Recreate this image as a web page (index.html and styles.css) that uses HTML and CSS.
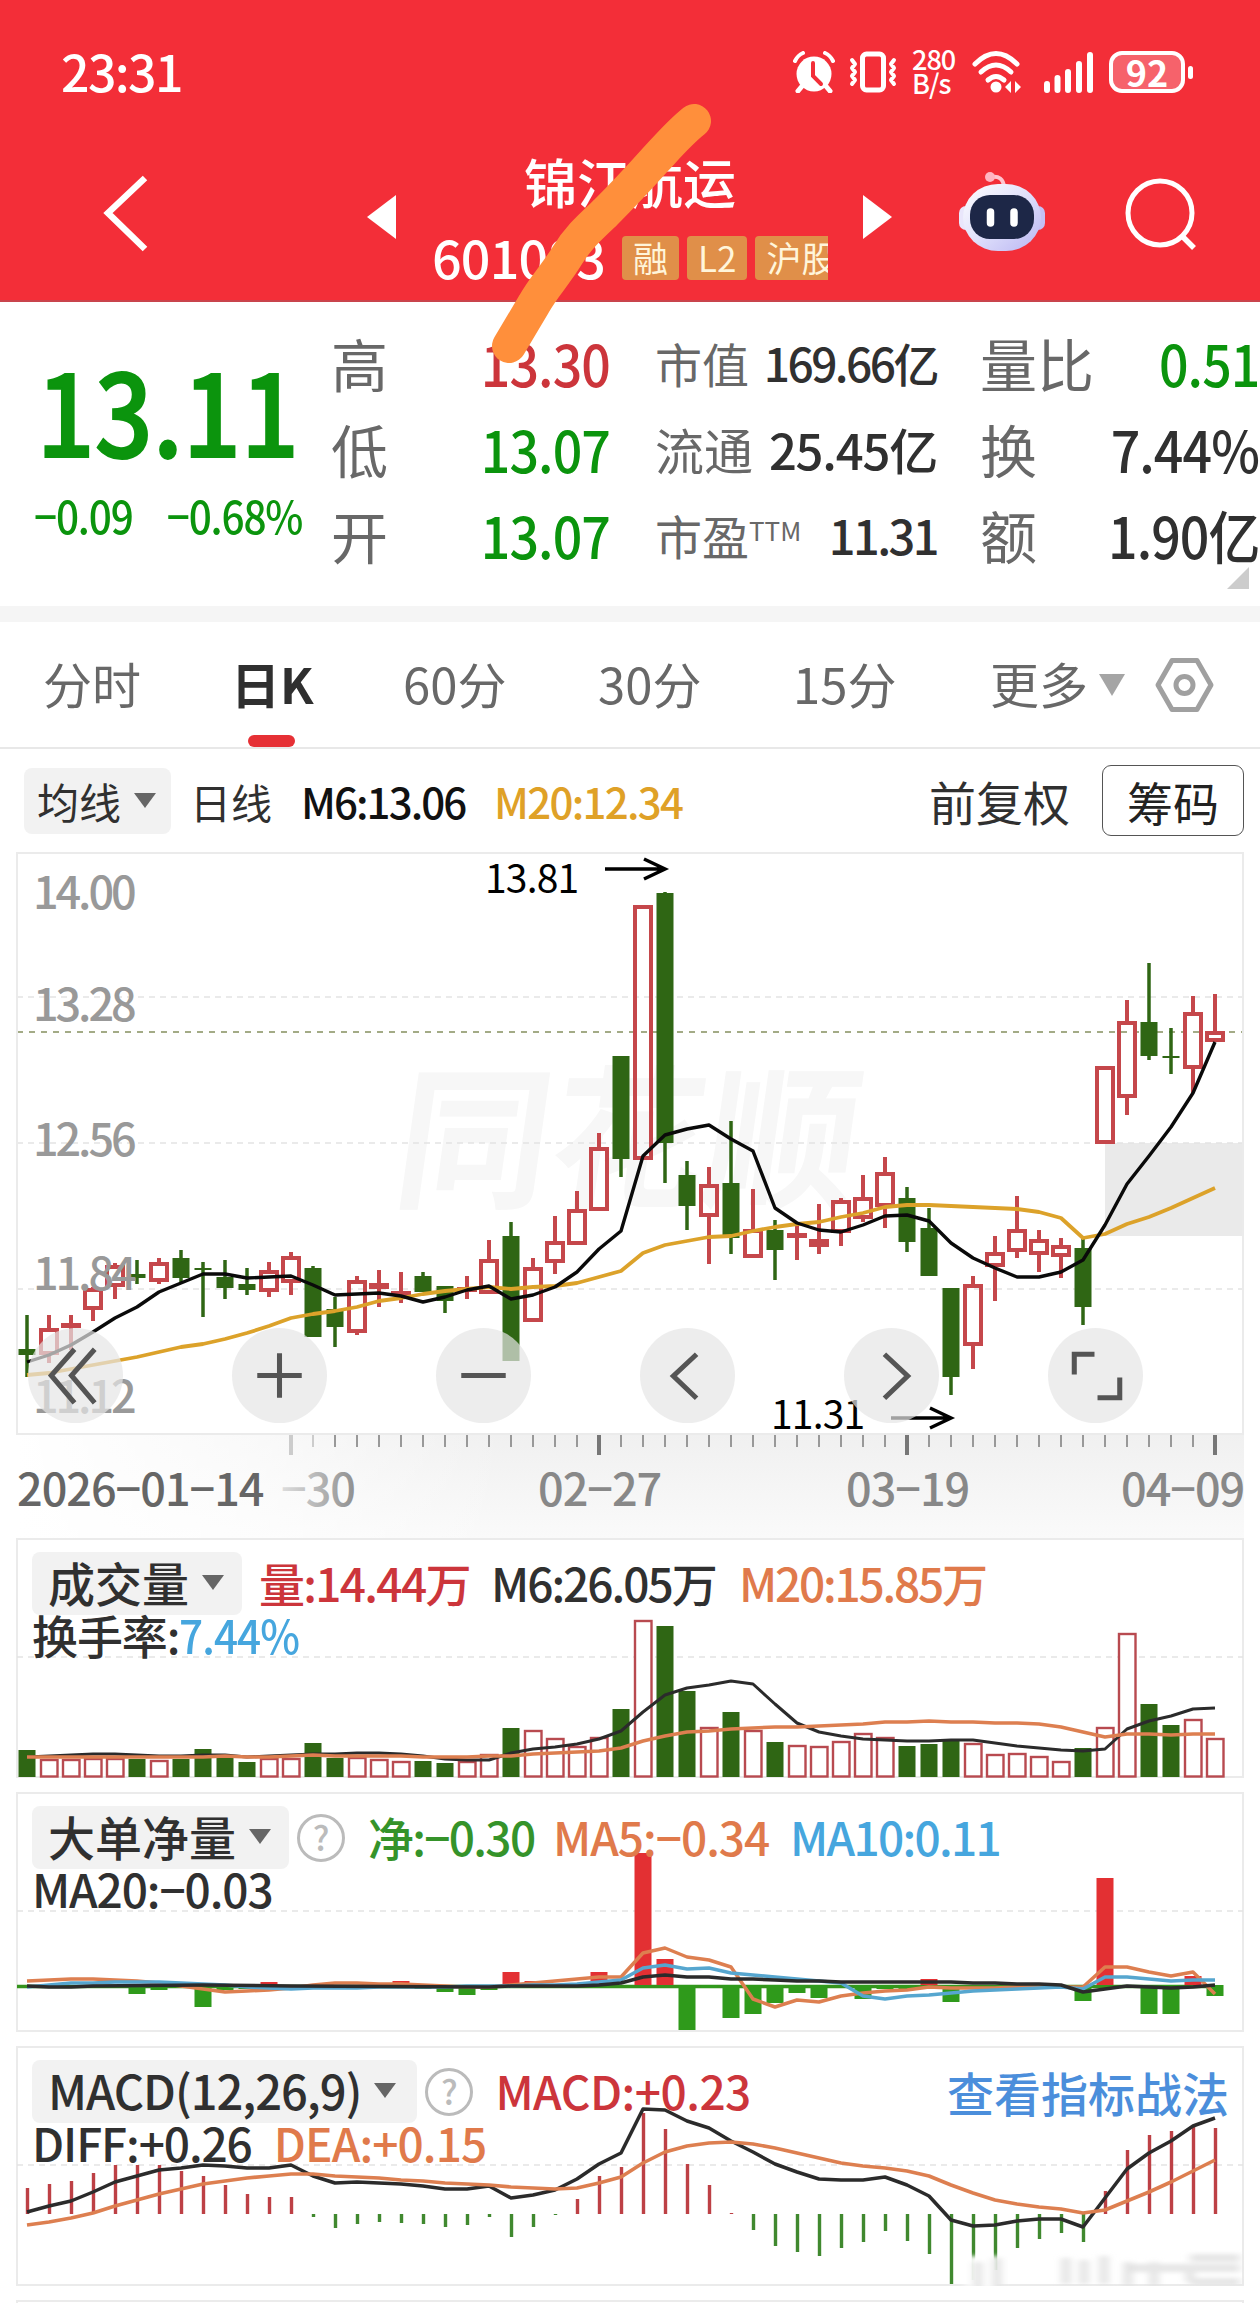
FILE: index.html
```
<!DOCTYPE html>
<html lang="zh-CN">

<head>
    <meta charset="UTF-8">
    <meta name="viewport" content="width=device-width, initial-scale=1">
    <title>锦江航运 601083</title>
    <link rel="stylesheet" href="styles.css">
</head>

<body>
    <!-- Header -->
    <header id="header">
        <div class="status-bar">
            <span class="time">23:31</span>
            <svg class="alarm" width="42" height="42" viewBox="0 0 42 42">
                <circle cx="21" cy="23" r="17.5" fill="#fff"/>
                <path d="M10 34l-5 6M32 34l5 6" stroke="#fff" stroke-width="5" stroke-linecap="round"/>
                <path d="M2 10q3-6 8-8M40 10q-3-6-8-8" stroke="#fff" stroke-width="4" fill="none" stroke-linecap="round"/>
                <path d="M20 12v13l8 8" stroke="#f32e38" stroke-width="4" fill="none" stroke-linecap="round"/>
            </svg>
            <svg class="vibrate" width="48" height="42" viewBox="0 0 48 42">
                <rect x="13.500" y="3" width="21" height="36" rx="4" fill="none" stroke="#fff" stroke-width="5"/>
                <path d="M3 9l3 4-3 4 3 4-3 4 3 4-3 4M45 9l-3 4 3 4-3 4 3 4-3 4 3 4" fill="none" stroke="#fff" stroke-width="4" stroke-linejoin="round" stroke-linecap="round"/>
            </svg>
            <div class="speed"><span>280</span><span>B/s</span></div>
            <svg class="wifi" width="52" height="42" viewBox="0 0 52 42">
                <g fill="none" stroke="#fff" stroke-width="5" stroke-linecap="round">
                    <path d="M4 13q21-21 42 0"/>
                    <path d="M10 21q15-14 30 0"/>
                    <path d="M17 29q8-7 16 0"/>
                </g>
                <circle cx="25" cy="36" r="5.500" fill="#fff"/>
                <path d="M40 30v12l-6-6zM44 30v12l6-6z" fill="#fff"/>
            </svg>
            <svg class="signal" width="50" height="42" viewBox="0 0 50 42">
                <path d="M3 33v6M13.500 27v12M24 21v18M35 13v26M46 4v35" stroke="#fff" stroke-width="6" stroke-linecap="round"/>
            </svg>
            <div class="battery">92</div>
        </div>
        <div class="nav-bar">
            <svg class="back" width="50" height="80" viewBox="0 0 50 80">
                <path d="M45 3L8 38l37 36" fill="none" stroke="#fff" stroke-width="6.500"/>
            </svg>
            <svg class="prev" width="30" height="44" viewBox="0 0 30 44"><path d="M29 0v44L0 22z" fill="#fff"/></svg>
            <div class="stock">
                <h1>锦江航运</h1>
                <div class="stock-code">
                    <span class="code">601083</span>
                    <span class="tag">融</span>
                    <span class="tag">L2</span>
                    <span class="tag">沪股</span>
                </div>
            </div>
            <svg class="next" width="30" height="44" viewBox="0 0 30 44"><path d="M0 0v44L29 22z" fill="#fff"/></svg>
            <svg class="robot" width="88" height="82" viewBox="0 0 88 82">
                <defs>
                    <linearGradient id="shell" x1="0" y1="0" x2="1" y2="1">
                        <stop offset="0" stop-color="#fff"/>
                        <stop offset="0.500" stop-color="#dfe0fb"/>
                        <stop offset="1" stop-color="#b9b4f2"/>
                    </linearGradient>
                </defs>
                <path d="M33 6q12-2 13 10" fill="none" stroke="#ffc4cf" stroke-width="4"/>
                <circle cx="32" cy="6" r="5" fill="#ffb5c2"/>
                <rect x="1" y="35" width="14" height="24" rx="7" fill="#e9e6fb"/>
                <rect x="73" y="35" width="14" height="24" rx="7" fill="#c5c0f5"/>
                <rect x="5" y="13" width="78" height="67" rx="35" fill="url(#shell)"/>
                <rect x="12" y="24" width="64" height="44" rx="20" fill="#1d2747"/>
                <path d="M32.500 41v11M56 41v11" stroke="#fff" stroke-width="7.500" stroke-linecap="round"/>
            </svg>
            <svg class="search" width="74" height="74" viewBox="0 0 74 74">
                <circle cx="36" cy="36" r="32" fill="none" stroke="#fff" stroke-width="5"/>
                <path d="M58 59l12 12" stroke="#fff" stroke-width="5.500"/>
            </svg>
        </div>
        <svg class="marker" width="260" height="280" viewBox="480 95 260 280">
            <path d="M694 121C680 132 668 146 655 160C638 179 622 196 605 213C588 229 578 238 567 256C554 277 544 286 534 304L509 346" fill="none" stroke="#ff8f3b" stroke-width="34" stroke-linecap="round" stroke-linejoin="round"/>
        </svg>
    </header>

    <!-- Quote -->
    <section id="quote">
        <div class="price down">
            <div class="last">13.11</div>
            <div class="change"><span>−0.09</span><span>−0.68%</span></div>
        </div>
        <dl class="col-a">
            <div><dt>高</dt><dd class="up">13.30</dd></div>
            <div><dt>低</dt><dd class="down">13.07</dd></div>
            <div><dt>开</dt><dd class="down">13.07</dd></div>
        </dl>
        <dl class="col-b">
            <div class="cap"><dt>市值</dt><dd>169.66亿</dd></div>
            <div class="float"><dt>流通</dt><dd>25.45亿</dd></div>
            <div class="pe"><dt>市盈<sup>TTM</sup></dt><dd>11.31</dd></div>
        </dl>
        <dl class="col-c">
            <div><dt>量比</dt><dd class="down">0.51</dd></div>
            <div><dt>换</dt><dd>7.44%</dd></div>
            <div><dt>额</dt><dd>1.90亿</dd></div>
        </dl>
        <i class="corner"></i>
    </section>

    <!-- Period tabs -->
    <nav id="tabs">
        <a>分时</a>
        <a class="active">日K</a>
        <a>60分</a>
        <a>30分</a>
        <a>15分</a>
        <a class="more">更多<i></i></a>
        <svg width="60" height="56" viewBox="0 0 60 56">
            <path d="M17 3.500h25L56 28 42 52.500H17L3 28z" fill="none" stroke="#a0a0a0" stroke-width="5" stroke-linejoin="round"/>
            <circle cx="29.500" cy="28" r="8.500" fill="none" stroke="#a0a0a0" stroke-width="5"/>
        </svg>
    </nav>

    <div id="toolbar">
        <button class="select">均线<i></i></button>
        <span class="day">日线</span>
        <span class="m6">M6:13.06</span>
        <span class="m20">M20:12.34</span>
        <span class="adjust">前复权</span>
        <button class="chips">筹码</button>
    </div>

    <!-- Candles -->
    <section id="kline">
        <svg id="kline-chart" width="1230" height="686" viewBox="16 852 1230 686">
            <defs>
                <linearGradient id="axis-y" x1="0" y1="0" x2="0" y2="1">
                    <stop offset="0" stop-color="#f0f0f0"/>
                    <stop offset="1" stop-color="#fafafa"/>
                </linearGradient>
                <linearGradient id="axis-x" x1="0" y1="0" x2="1" y2="0">
                    <stop offset="0" stop-color="#fff"/>
                    <stop offset="0.200" stop-color="#fff" stop-opacity="0.600"/>
                    <stop offset="0.400" stop-color="#fff" stop-opacity="0"/>
                </linearGradient>
                <linearGradient id="fade" x1="0" y1="0" x2="1" y2="0">
                    <stop offset="0" stop-color="#ddd"/>
                    <stop offset="1" stop-color="#909090"/>
                </linearGradient>
            </defs>
            <rect x="17" y="1434" width="1227" height="104" fill="url(#axis-y)"/>
            <rect x="17" y="1434" width="1227" height="104" fill="url(#axis-x)"/>
            <text class="watermark" transform="translate(390 1196) skewX(-8)">同花顺</text>
            <rect x="1105" y="1143" width="138" height="93" fill="#eaeaea"/>
            <g class="grid">
                <path d="M17 997H1243M17 1143H1243M17 1289H1243"/>
            </g>
            <path d="M17 1032H1243" stroke="#a3ab86" stroke-width="2" stroke-dasharray="6 6"/>
            <rect x="17" y="853" width="1226" height="581" class="frame"/>
            <g id="candles"></g>
            <g class="price-labels">
                <text x="33" y="909">14.00</text>
                <text x="33" y="1021">13.28</text>
                <text x="33" y="1156">12.56</text>
                <text x="33" y="1290">11.84</text>
                <text x="33" y="1413">11.12</text>
            </g>
            <g class="peak">
                <text x="485" y="893">13.81</text>
                <path d="M605 869H665M644 859L665 869L644 879"/>
                <text x="771" y="1429">11.31</text>
                <path d="M891 1418H951M930 1408L951 1418L930 1428"/>
            </g>
            <g id="ticks"></g>
            <g class="dates">
                <text x="17" y="1506" fill="#666">2026−01−14</text>
                <text x="281" y="1506" fill="url(#fade)">−30</text>
                <text x="538" y="1506">02−27</text>
                <text x="846" y="1506">03−19</text>
                <text x="1121" y="1506">04−09</text>
            </g>
        </svg>
        <div class="controls">
            <button><svg viewBox="0 0 94 94"><path d="M46 21L23 47l23 27M66 21L43 47l23 27"/></svg></button>
            <button><svg viewBox="0 0 94 94"><path d="M47 25v44M25 47h44"/></svg></button>
            <button><svg viewBox="0 0 94 94"><path d="M25 47h44"/></svg></button>
            <button><svg viewBox="0 0 94 94"><path d="M56 26L33 47.500l23 22"/></svg></button>
            <button><svg viewBox="0 0 94 94"><path d="M40 26l23 21.500-23 22"/></svg></button>
            <button><svg viewBox="0 0 94 94"><path d="M26 46V26h20M71 49v20H49"/></svg></button>
        </div>
    </section>

    <!-- Volume -->
    <section class="panel" id="volume">
        <svg width="1228" height="240" viewBox="16 1538 1228 240">
            <path class="grid" d="M17 1657H1243"/>
            <g id="volume-chart"></g>
        </svg>
        <div class="legend">
            <button class="select">成交量<i></i></button>
            <span class="up v1">量:14.44万</span>
            <span class="v2">M6:26.05万</span>
            <span class="orange v3">M20:15.85万</span>
        </div>
        <div class="legend-sub">换手率:<span class="blue rate">7.44%</span></div>
    </section>

    <!-- Net big orders -->
    <section class="panel" id="netflow">
        <svg width="1228" height="240" viewBox="16 1792 1228 240">
            <path class="grid" d="M17 1911H1243"/>
            <g id="netflow-chart"></g>
        </svg>
        <div class="legend">
            <button class="select">大单净量<i></i></button>
            <span class="help">?</span>
            <span class="green n1">净:−0.30</span>
            <span class="orange n2">MA5:−0.34</span>
            <span class="blue n3">MA10:0.11</span>
        </div>
        <div class="legend-sub">MA20:−0.03</div>
    </section>

    <!-- MACD -->
    <section class="panel" id="macd">
        <svg width="1228" height="240" viewBox="16 2046 1228 240">
            <defs>
                <filter id="soft" x="-0.200" y="-0.200" width="1.400" height="1.400"><feGaussianBlur stdDeviation="4 2"/></filter>
            </defs>
            <path class="grid" d="M17 2165H1243"/>
            <g id="macd-chart"></g>
            <g filter="url(#soft)">
                <rect x="966" y="2256" width="36" height="32" fill="#fff"/>
                <path d="M978 2262v26M997 2258v30M1066 2258v26M1084 2260v24M1104 2256v28M1128 2262v24M1154 2262v24M1190 2266v16" stroke="#dcdcdc" stroke-width="7"/>
                <path d="M1130 2268h110M1190 2258h50M1190 2282h50" stroke="#e6e6e6" stroke-width="8"/>
            </g>
        </svg>
        <div class="legend">
            <button class="select">MACD(12,26,9)<i></i></button>
            <span class="help">?</span>
            <span class="up d1">MACD:+0.23</span>
            <a class="link">查看指标战法</a>
        </div>
        <div class="legend-sub">DIFF:+0.26<span class="orange dea">DEA:+0.15</span></div>
    </section>

    <div id="next-panel"></div>
    <script src="charts.js"></script>
</body>

</html>
```
FILE: styles.css
```
html {
    margin: 0;
    background: #fff;
}

body {
    width: 1260px;
    height: 2303px;
    margin: 0;
    overflow: hidden;
    position: relative;
    color: #303030;
    font-family: 'Noto Sans CJK SC', sans-serif;
    font-weight: 500;
}

button {
    font-family: inherit;
    font-weight: inherit;
    letter-spacing: inherit;
    border: none;
    padding: 0;
    margin: 0;
    color: inherit;
}

svg {
    display: block;
    flex: none;
}

.up {
    color: #cc353b;
}

.down {
    color: #0b940d;
}

.green {
    color: #35932a;
}

.orange {
    color: #e07a4b;
}

.blue {
    color: #46a6de;
}

/* header */

#header {
    position: relative;
    height: 302px;
    background: #f32e38;
    border-bottom: 2px solid #c9444c;
    box-sizing: border-box;
    color: #fff;
}

.status-bar {
    display: flex;
    align-items: center;
    height: 144px;
    padding: 0 75px 0 61px;
    box-sizing: border-box;
}

.time {
    margin: -5px auto 0 0;
    font-size: 50px;
    line-height: 60px;
    letter-spacing: -1.6px;
}

.vibrate {
    margin-left: 14px;
}

.speed {
    display: flex;
    flex-direction: column;
    margin: -2px 0 0 15px;
    width: 45px;
    font-size: 27px;
    line-height: 24px;
    letter-spacing: -1px;
}

.wifi {
    margin-left: 14px;
}

.signal {
    margin-left: 21px;
}

.battery {
    position: relative;
    width: 68px;
    height: 34px;
    margin-left: 15px;
    border: 4px solid #fff;
    border-radius: 13px;
    background: #f6626b;
    font-size: 36px;
    line-height: 32px;
    font-weight: 700;
    text-align: center;
}

.battery::after {
    content: '';
    position: absolute;
    right: -12px;
    top: 11px;
    width: 5px;
    height: 13px;
    border-radius: 3px;
    background: #fff;
}

.nav-bar {
    display: flex;
    align-items: center;
    height: 142px;
}

.back {
    margin-left: 100px;
}

.prev {
    margin-left: 217px;
    margin-top: 4px;
}

.stock {
    width: 466px;
    height: 142px;
    text-align: center;
}

.stock h1 {
    margin: 4px 0 0;
    font-size: 53px;
    line-height: 66px;
    font-weight: 500;
}

.stock-code {
    display: flex;
    align-items: center;
    width: 396px;
    height: 50px;
    margin: 19px 0 0 35px;
    overflow-x: clip;
    white-space: nowrap;
}

.stock .code {
    width: 190px;
    flex: none;
    margin-top: -3px;
    font-size: 52px;
    line-height: 50px;
    text-align: left;
    letter-spacing: -0.8px;
}

.tag {
    flex: none;
    height: 44px;
    padding: 0 11px;
    margin-right: 8px;
    background: #e08f49;
    color: #fff5da;
    border-radius: 4px;
    font-size: 35px;
    line-height: 42px;
    font-weight: 400;
}

.next {
    margin-top: 4px;
}

.robot {
    margin-left: 65px;
    margin-top: -6px;
}

.search {
    margin-left: 78px;
    margin-top: -2px;
}

/* hand-drawn stroke over the code */

.marker {
    position: absolute;
    left: 480px;
    top: 95px;
    z-index: 5;
}

/* quote */

#quote {
    position: relative;
    display: flex;
    height: 320px;
    box-sizing: border-box;
    border-bottom: 16px solid #f5f5f5;
}

.price {
    width: 331px;
    padding-left: 34px;
    box-sizing: border-box;
    white-space: nowrap;
}

.last {
    width: 270px;
    margin-top: 48px;
    font-size: 113px;
    line-height: 116px;
    text-indent: 3px;
    transform: scaleX(0.9);
    transform-origin: left;
    -webkit-text-stroke: 2px currentColor;
}

.change {
    display: flex;
    gap: 38px;
    width: 300px;
    margin-top: 21px;
    font-size: 45px;
    line-height: 56px;
    letter-spacing: -1.3px;
    transform: scaleX(0.9);
    transform-origin: left;
}

dl {
    margin: 17px 0 0;
    white-space: nowrap;
}

dl div {
    display: flex;
    align-items: center;
    justify-content: space-between;
    height: 86px;
}

dt {
    color: #686868;
    font-weight: 400;
}

dd {
    margin: 0;
}

.col-a,
.col-c {
    font-size: 57px;
}

.col-a dd,
.col-c dd {
    letter-spacing: -1px;
    transform: scaleX(0.91);
    transform-origin: right;
}

.col-a {
    width: 279px;
}

.col-b {
    width: 282px;
    margin-left: 45px;
    font-size: 47px;
}

.cap dd {
    font-size: 46px;
    letter-spacing: -2.5px;
}

.float {
    font-size: 49px;
}

.float dd {
    letter-spacing: -1.2px;
}

.pe dd {
    letter-spacing: -2.6px;
}

.col-b sup {
    font-size: 26px;
    line-height: 0;
    vertical-align: 14px;
}

.col-c {
    width: 279px;
    margin-left: 43px;
}

.corner {
    position: absolute;
    right: 11px;
    bottom: 17px;
    border-left: 22px solid transparent;
    border-bottom: 22px solid #ccc;
}

/* tabs */

#tabs {
    display: flex;
    align-items: center;
    height: 127px;
    padding-left: 43px;
    box-sizing: border-box;
    border-bottom: 2px solid #e8e8e8;
    font-size: 49px;
    color: #686868;
    font-weight: 400;
}

#tabs a {
    position: relative;
    width: 195px;
    line-height: 121px;
    height: 125px;
}

#tabs a:first-child {
    width: 188px;
}

#tabs a:nth-child(2) {
    width: 172px;
}

#tabs a:nth-child(5) {
    width: 197px;
}

#tabs .active {
    color: #2f2f2f;
    font-weight: 700;
}

#tabs .active::after {
    content: '';
    position: absolute;
    left: 17px;
    bottom: 0;
    width: 47px;
    height: 12px;
    border-radius: 6px;
    background: #e63035;
}

#tabs .more {
    width: 165px;
}

.more i {
    display: inline-block;
    margin-left: 11px;
    vertical-align: 8px;
    border-top: 22px solid #a5a5a5;
    border-left: 13px solid transparent;
    border-right: 13px solid transparent;
}

/* toolbar */

#toolbar {
    display: flex;
    align-items: center;
    height: 103px;
    padding: 0 16px 0 24px;
    box-sizing: border-box;
    white-space: nowrap;
    font-size: 42px;
}

.select {
    display: flex;
    align-items: center;
    background: #f2f2f2;
    border-radius: 8px;
}

.select i {
    border-top: 15px solid #666;
    border-left: 11px solid transparent;
    border-right: 11px solid transparent;
}

#toolbar .select {
    width: 147px;
    height: 66px;
    padding-left: 13px;
    font-size: 42px;
    font-weight: 400;
}

#toolbar .select i {
    margin-left: 13px;
}

.day {
    width: 111px;
    margin-left: 19px;
    font-size: 41px;
    font-weight: 400;
}

.m6 {
    width: 193px;
    color: #111;
    letter-spacing: -1.9px;
}

.m20 {
    color: #dfa127;
    letter-spacing: -1.7px;
}

.adjust {
    margin-left: auto;
    font-size: 47px;
    font-weight: 400;
}

.chips {
    width: 142px;
    height: 71px;
    margin-left: 32px;
    border: 1.5px solid #555;
    border-radius: 9px;
    background: #fff;
    font-size: 46px;
    line-height: 66px;
    font-weight: 400;
    color: #222;
}

/* k line */

#kline {
    position: relative;
    height: 686px;
    padding-left: 16px;
}

.frame {
    fill: none;
    stroke: #ebebeb;
    stroke-width: 2;
}

.grid {
    fill: none;
    stroke: #e4e4e4;
    stroke-width: 1.5;
    stroke-dasharray: 6 5;
}

.watermark {
    font-size: 154px;
    font-weight: 700;
    fill: #f7f7f7;
}

.price-labels {
    font-size: 45px;
    fill: #999;
    letter-spacing: -3.1px;
}

.peak {
    font-size: 39px;
    font-weight: 400;
    letter-spacing: -0.8px;
}

.peak path {
    fill: none;
    stroke: #000;
    stroke-width: 3.5;
}

.dates {
    font-size: 45px;
    fill: #888;
    letter-spacing: -1px;
}

.controls {
    position: absolute;
    left: 28px;
    top: 476px;
    display: flex;
    gap: 109px;
}

.controls button {
    width: 95px;
    height: 95px;
    border-radius: 50%;
    background: rgba(230, 230, 230, 0.7);
}

.controls path {
    fill: none;
    stroke: #555;
    stroke-width: 5;
}

/* indicator panels */

.panel {
    position: relative;
    height: 240px;
    margin: 0 16px 14px;
    padding: 14px 0 0 16px;
    box-sizing: border-box;
    white-space: nowrap;
    font-size: 46px;
    letter-spacing: -1.7px;
}

.panel::before {
    content: '';
    position: absolute;
    inset: 0;
    border: 2px solid #ebebeb;
}

.panel > svg {
    position: absolute;
    left: 0;
    top: 0;
}

.legend {
    position: relative;
    display: flex;
    align-items: center;
    height: 63px;
    line-height: 60px;
}

.legend span {
    margin-top: -3px;
}

.legend .select {
    height: 63px;
    padding: 0 18px 3px 16px;
    box-sizing: border-box;
    font-size: 47px;
    line-height: 60px;
    letter-spacing: 0;
}

.legend .select i {
    margin-left: 13px;
}

#macd .select {
    padding-right: 21px;
    letter-spacing: -1px;
}

.legend-sub {
    position: relative;
    height: 48px;
    line-height: 38px;
    letter-spacing: -1.1px;
}

.rate {
    display: inline-block;
    letter-spacing: -1px;
    transform: scaleX(0.92);
    transform-origin: left;
}

.legend .help {
    width: 42px;
    height: 42px;
    margin: 0 0 0 8px;
    border: 3px solid #bbb;
    border-radius: 50%;
    color: #bbb;
    font-size: 34px;
    line-height: 40px;
    letter-spacing: 0;
    text-align: center;
}

.v1 {
    width: 232px;
    margin-left: 17px;
}

.v2 {
    width: 248px;
    letter-spacing: -2px;
}

.v3 {
    letter-spacing: -2.2px;
}

.n1 {
    width: 185px;
    margin-left: 23px;
}

.n2 {
    width: 237px;
    letter-spacing: -1px;
}

.d1 {
    margin-left: 22px;
    letter-spacing: -0.5px;
}

.link {
    margin-left: auto;
    margin-right: 15px;
    font-size: 47px;
    letter-spacing: 0;
    color: #4b8edb;
}

.dea {
    margin-left: 22px;
    letter-spacing: -0.9px;
}

#next-panel {
    height: 2px;
    margin: 0 16px;
    border: 2px solid #ebebeb;
    border-bottom: none;
}
```
FILE: charts.js
```
const NS = 'http://www.w3.org/2000/svg';
const RED = '#c5474b';
const GREEN = '#2f6614';
const x = i => 27 + i * 22;

function add(parent, tag, attrs) {
    const el = document.createElementNS(NS, tag);
    for (const k in attrs) el.setAttribute(k, attrs[k]);
    parent.appendChild(el);
}

// null entries are skipped, the line runs straight through them
function line(parent, ys, color, width) {
    const pts = [];
    ys.forEach((y, i) => { if (y) pts.push(x(i) + ',' + y); });
    add(parent, 'polyline', { points: pts.join(' '), fill: 'none', stroke: color, 'stroke-width': width, 'stroke-linejoin': 'round' });
}

// r = rise, g = fall: high, body top, body bottom, low
const candles = [
    ['g', 1315, 1349, 1355, 1377], ['r', 1315, 1328, 1355, 1363], ['r', 1315, 1323, 1327, 1350], ['r', 1287, 1288, 1310, 1321],
    ['r', 1263, 1265, 1287, 1299], ['g', 1260, 1274, 1278, 1284], ['r', 1258, 1262, 1282, 1284], ['g', 1250, 1258, 1278, 1282],
    ['g', 1262, 1268, 1270, 1317], ['g', 1260, 1277, 1288, 1299], ['g', 1268, 1284, 1290, 1295], ['r', 1262, 1270, 1292, 1297],
    ['r', 1252, 1256, 1283, 1295], ['g', 1266, 1268, 1337, 1337], ['g', 1297, 1309, 1327, 1347], ['r', 1276, 1280, 1333, 1335],
    ['r', 1270, 1283, 1289, 1307], ['r', 1272, 1291, 1296, 1303], ['g', 1272, 1276, 1292, 1292], ['g', 1286, 1286, 1301, 1313],
    ['r', 1276, 1287, 1292, 1299], ['r', 1240, 1259, 1294, 1294], ['g', 1222, 1236, 1361, 1361], ['r', 1258, 1267, 1322, 1322],
    ['r', 1216, 1241, 1263, 1274], ['r', 1191, 1209, 1245, 1245], ['r', 1133, 1147, 1211, 1211], ['g', 1056, 1056, 1159, 1177],
    ['r', 905, 905, 1160, 1160], ['g', 892, 893, 1143, 1183], ['g', 1161, 1175, 1206, 1230], ['r', 1167, 1184, 1217, 1264],
    ['g', 1121, 1183, 1238, 1254], ['r', 1189, 1229, 1258, 1258], ['g', 1220, 1230, 1250, 1280], ['r', 1224, 1233, 1237, 1260],
    ['r', 1204, 1239, 1247, 1254], ['r', 1198, 1200, 1233, 1246], ['r', 1175, 1197, 1219, 1222], ['r', 1157, 1172, 1207, 1228],
    ['g', 1187, 1198, 1242, 1252], ['g', 1208, 1228, 1276, 1276], ['g', 1288, 1288, 1377, 1395], ['r', 1276, 1284, 1346, 1369],
    ['r', 1236, 1252, 1267, 1301], ['r', 1196, 1229, 1252, 1258], ['r', 1230, 1239, 1255, 1272], ['r', 1238, 1245, 1257, 1278],
    ['g', 1238, 1248, 1307, 1325], ['r', 1066, 1066, 1144, 1144], ['r', 1000, 1021, 1098, 1115], ['g', 963, 1022, 1056, 1060],
    ['g', 1028, 1056, 1058, 1074], ['r', 996, 1012, 1069, 1093], ['r', 994, 1031, 1042, 1042]
];

const kline = document.getElementById('candles');
candles.forEach(([c, high, top, bottom, low], i) => {
    if (c === 'g') {
        add(kline, 'path', { d: `M${x(i)} ${high}V${low}`, stroke: GREEN, 'stroke-width': 3.5 });
        add(kline, 'rect', { x: x(i) - 8.5, y: top, width: 17, height: bottom - top, fill: GREEN });
    } else {
        add(kline, 'path', { d: `M${x(i)} ${high}V${top}M${x(i)} ${bottom}V${low}`, stroke: RED, 'stroke-width': 4 });
        add(kline, 'rect', { x: x(i) - 8, y: top + 2, width: 16, height: Math.max(bottom - top - 4, 1), fill: 'none', stroke: RED, 'stroke-width': 4 });
    }
});
line(kline, [1375, 1373, 1369, 1365, 1361, 1357, 1352, 1347, 1344, 1339, 1333, 1326, 1318, 1314, 1311, 1307, 1301, 1298,
    1294, 1291, 1289, 1287, 1289, 1287, 1286, 1283, 1277, 1271, 1253, 1245, 1241, 1237, 1236, 1231, 1227, 1224, 1222, 1217,
    1213, 1207, 1205, 1205, 1206, 1207, 1208, 1209, 1212, 1218, 1238, 1234, 1224, 1217, 1208, 1198, 1188], '#dca22a', 3.8);
line(kline, [1362, 1355, 1345, 1332, 1318, 1307, 1292, 1283, 1274, 1274, 1278, 1277, 1276, 1285, 1295, 1294, 1293, 1296,
    1302, 1297, 1290, 1286, 1299, 1295, 1287, 1272, 1249, 1231, 1156, 1135, 1129, 1125, 1139, 1151, 1208, 1223, 1230, 1232,
    1225, 1216, 1215, 1221, 1243, 1258, 1268, 1277, 1277, 1272, 1260, 1225, 1184, 1156, 1127, 1093, 1042], '#0a0a0a', 3.4);

// date ruler
const ticks = document.getElementById('ticks');
for (let i = 12; i < 55; i++) {
    const big = (i - 12) % 14 === 0;
    add(ticks, 'path', { d: `M${x(i)} 1435V${big ? 1455 : 1447}`, stroke: i < 14 ? '#ccc' : big ? '#777' : '#999', 'stroke-width': big ? 4 : 2 });
}

// volume
const volume = document.getElementById('volume-chart');
const tops = [1750, 1759, 1759, 1758, 1758, 1759, 1760, 1759, 1749, 1758, 1762, 1758, 1758, 1743, 1758, 1757, 1759, 1761,
    1761, 1763, 1761, 1754, 1728, 1730, 1738, 1746, 1737, 1709, 1620, 1626, 1691, 1727, 1712, 1730, 1742, 1745, 1746, 1741,
    1733, 1737, 1746, 1744, 1741, 1743, 1754, 1753, 1756, 1761, 1748, 1727, 1633, 1704, 1725, 1719, 1738];
tops.forEach((y, i) => {
    if (candles[i][0] === 'g') add(volume, 'rect', { x: x(i) - 8.5, y: y, width: 17, height: 1777 - y, fill: GREEN });
    else add(volume, 'rect', { x: x(i) - 8, y: y + 1, width: 16.5, height: 1775.5 - y, fill: '#fff', stroke: '#b84a50', 'stroke-width': 2.4 });
});
line(volume, [1757, 1756, 1755, 1754, 1754, 1755, 1756, 1756, 1755, 1755, 1757, 1756, 1755, 1754, 1754, 1753, 1753, 1754,
    1756, 1759, 1760, 1760, 1753, 1749, 1747, 1744, 1739, 1731, 1712, 1695, 1688, 1685, 1681, 1684, 1704, 1723, 1732, 1736,
    1739, 1740, 1741, 1741, 1740, 1740, 1743, 1746, 1748, 1750, 1751, 1749, 1729, 1721, 1716, 1709, 1708], '#2b2b2b', 3);
line(volume, [1757, 1757, 1757, 1757, 1757, 1757, 1757, 1757, 1757, 1756, 1757, 1757, 1756, 1755, 1756, 1756, 1756, 1756,
    1757, 1757, 1757, 1756, 1756, 1754, 1753, 1752, 1751, 1748, 1741, 1736, 1732, 1731, 1729, 1728, 1727, 1727, 1726, 1725,
    1724, 1722, 1722, 1721, 1722, 1722, 1723, 1723, 1724, 1727, 1732, 1737, 1734, 1734, 1735, 1734, 1734], '#dd7f50', 3.5);

// net flow: index, edge; above the axis is inflow
const netflow = document.getElementById('netflow-chart');
add(netflow, 'path', { d: 'M17 1986.500H1215', stroke: '#35931d', 'stroke-width': 3.5 });
[[5, 1994], [6, 1990], [8, 2007], [9, 1990], [10, 1989], [11, 1982], [17, 1981], [18, 1989], [19, 1992], [20, 1995], [21, 1990],
    [22, 1972], [23, 1981], [26, 1972], [28, 1853], [29, 1959], [30, 2030], [31, 1988], [32, 2018], [33, 2014], [34, 2003],
    [35, 1993], [36, 1998], [38, 1999], [39, 1989], [40, 1989], [41, 1979], [42, 2002], [48, 2001], [49, 1878], [51, 2014],
    [52, 2014], [53, 1976], [54, 1996]].forEach(([i, y]) => {
    add(netflow, 'rect', { x: x(i) - 8.5, y: Math.min(y, 1985), width: 17, height: Math.abs(y - 1985), fill: y < 1985 ? '#e33033' : '#2f9a1b' });
});
line(netflow, [1981, 1980, 1979, 1979, 1980, 1981, 1983, 1986, 1989, 1992, 1991, 1990, 1988, 1985, 1983, 1983, 1984, 1984,
    1985, 1986, 1987, 1987, 1985, 1983, 1981, 1979, 1977, 1977, 1953, 1948, 1957, 1960, 1967, 1999, 2007, 2000, 2002, 1996,
    1993, 1991, 1990, 1987, 1988, 1988, 1988, 1987, 1987, 1987, 1987, 1967, 1967, 1972, 1976, 1972, 1994], '#dd7f50', 3.5);
line(netflow, [1987, 1985, 1983, 1983, 1982, 1982, 1982, 1983, 1984, 1985, 1987, 1988, 1989, 1988, 1988, 1988, 1987, 1987,
    1987, 1987, 1986, 1986, 1986, 1985, 1985, 1984, 1982, 1980, 1968, 1965, 1969, 1968, 1973, 1975, 1977, 1979, 1981, 1983,
    1996, 1999, 1996, 1995, 1993, 1991, 1990, 1989, 1988, 1987, 1989, 1977, 1977, 1979, 1981, 1980, 1980], '#56a6cf', 3.5);
line(netflow, [1986, 1987, 1987, 1986, null, null, null, null, 1985, null, null, null, 1986, null, null, null, null, null,
    null, null, null, 1987, 1986, 1986, 1986, 1986, 1985, 1983, 1977, 1975, 1977, 1977, 1979, 1979, 1980, 1981, 1981, 1982,
    1982, 1982, 1982, 1982, 1982, 1983, 1983, 1984, 1984, 1985, 1992, 1989, 1986, 1987, 1988, 1987, 1985], '#2b2b2b', 3.5);

// macd
const macd = document.getElementById('macd-chart');
[2188, 2184, 2181, 2173, 2165, 2165, 2165, 2171, 2176, 2185, 2194, 2197, 2197, 2217, 2228, 2224, 2222, 2223, 2224, 2227, 2225,
    2217, 2237, 2227, 2215, 2199, 2176, 2167, 2113, 2129, 2164, 2185, 2213, 2230, 2246, 2252, 2256, 2248, 2242, 2231, 2241,
    2254, 2284, 2280, 2270, 2248, 2239, 2233, 2242, 2191, 2150, 2135, 2131, 2127, 2128].forEach((y, i) => {
    add(macd, 'path', { d: `M${x(i) + 0.5} 2214V${y}`, stroke: y < 2214 ? '#bd4045' : '#40892f', 'stroke-width': 3.4 });
});
line(macd, [2212, 2206, 2201, 2192, 2182, 2176, 2170, 2168, 2165, 2166, 2168, 2168, 2165, 2176, 2183, 2182, 2183, 2184, 2186,
    2189, 2189, 2186, 2198, 2195, 2190, 2179, 2164, 2153, 2109, 2110, 2121, 2128, 2141, 2152, 2164, 2172, 2179, 2180, 2180,
    2177, 2185, 2196, 2220, 2226, 2225, 2221, 2219, 2219, 2227, 2198, 2169, 2153, 2141, 2126, 2118], '#2b2b2b', 3.5);
line(macd, [2225, 2222, 2218, 2213, 2206, 2200, 2194, 2189, 2184, 2181, 2178, 2176, 2174, 2174, 2176, 2177, 2178, 2180, 2181,
    2183, 2184, 2185, 2187, 2188, 2189, 2188, 2183, 2177, 2163, 2152, 2146, 2143, 2142, 2144, 2148, 2153, 2158, 2163, 2166,
    2168, 2171, 2176, 2185, 2193, 2200, 2204, 2207, 2209, 2213, 2210, 2201, 2192, 2182, 2171, 2160], '#dd7f50', 3.6);
```
